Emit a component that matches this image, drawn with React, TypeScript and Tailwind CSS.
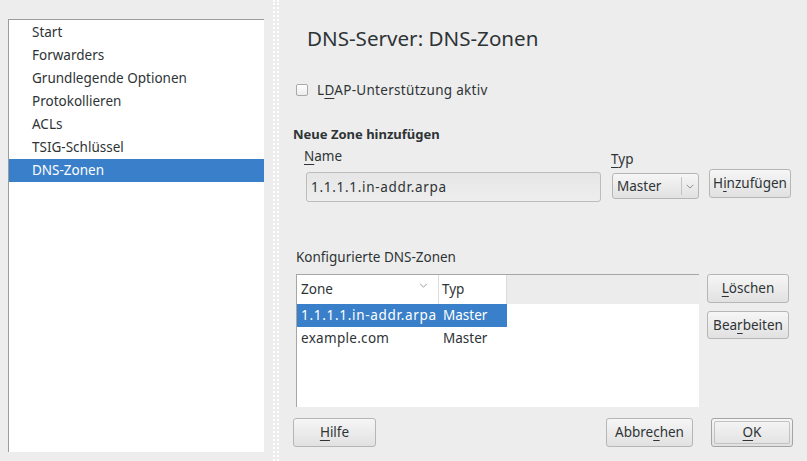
import { FC, ReactNode } from "react";

const navItems = [
  "Start",
  "Forwarders",
  "Grundlegende Optionen",
  "Protokollieren",
  "ACLs",
  "TSIG-Schlüssel",
  "DNS-Zonen",
];

// kleiner Chevron für Combo und Tabellenkopf
const Chevron: FC<{ className?: string }> = ({ className }) => (
  <svg viewBox="0 0 10 6" className={className} fill="none" stroke="currentColor" strokeWidth="1.2">
    <path d="M1 1l4 4 4-4" />
  </svg>
);

const Btn: FC<{ children: ReactNode; className?: string }> = ({ children, className = "" }) => (
  <div
    className={`flex items-center justify-center rounded-[3px] border border-[#b6b6b6] bg-gradient-to-b from-[#f6f6f6] to-[#e1e1e1] text-[#2e3436] ${className}`}
  >
    {children}
  </div>
);

const U: FC<{ children: ReactNode }> = ({ children }) => (
  <span className="underline decoration-[1px] underline-offset-[3px]">{children}</span>
);

const App: FC = () => {
  return (
    <div
      className="flex w-[807px] h-[461px] bg-[#ededed] text-[#2e3436] text-[13.5px] overflow-hidden"
      style={{ fontFamily: '"Noto Sans", "Open Sans", sans-serif' }}
    >
      {/* Navigation links */}
      <div className="pt-[19px] pl-[8px] pb-[9px] w-[264px] shrink-0">
        <div className="h-full bg-white border-t border-l border-[#9c9c9c] pt-[1px]">
          {navItems.map((item) => (
            <div
              key={item}
              className={`h-[23px] pl-[23px] flex items-center ${
                item === "DNS-Zonen" ? "bg-[#3a7fc9] text-white" : ""
              }`}
            >
              {item}
            </div>
          ))}
        </div>
      </div>

      {/* Trenner */}
      <div className="ml-[9px] w-[6px] border-x-2 border-dotted border-white shrink-0" />

      {/* Inhalt */}
      <div className="flex flex-col flex-1">
        <div className="pt-[25px] pl-[28px] text-[20.6px] leading-[26px]">DNS-Server: DNS-Zonen</div>

        <div className="mt-[29px] pl-[17px] h-[20px] flex items-center gap-[9px]">
          <div className="w-[12px] h-[12px] rounded-[2px] border border-[#a9a9a9] bg-gradient-to-b from-white to-[#ececec]" />
          <span className="tracking-[0.3px]">
            L<U>D</U>AP-Unterstützung aktiv
          </span>
        </div>

        <div className="mt-[25px] pl-[14px] h-[20px] flex items-center font-bold text-[13px]">Neue Zone hinzufügen</div>

        <div className="flex">
          <div className="ml-[25px] flex flex-col">
            <div className="h-[22px] flex items-center">
              <span>
                <U>N</U>ame
              </span>
            </div>
            <div className="mt-[5px] ml-[2px] w-[295px] h-[30px] rounded-[3px] border border-[#bcbcbc] bg-gradient-to-b from-[#e6e6e6] to-[#eeeeee] flex items-center pl-[4px] tracking-[0.7px]">
              1.1.1.1.in-addr.arpa
            </div>
          </div>
          <div className="ml-[10px] flex flex-col">
            <div className="mt-[3px] h-[22px] flex items-center">
              <span>
                <U>T</U>yp
              </span>
            </div>
            <div className="mt-[3px] ml-[1px] w-[87px] h-[26px] rounded-[3px] border border-[#b6b6b6] bg-gradient-to-b from-[#f6f6f6] to-[#e1e1e1] flex items-center">
              <span className="pl-[4px] flex-1">Master</span>
              <div className="w-px h-[18px] bg-[#c4c4c4]" />
              <Chevron className="w-[8px] h-[5px] mx-[4px] text-[#8a8a8a]" />
            </div>
          </div>
          <div className="ml-[10px] mt-[24px]">
            <Btn className="w-[82px] h-[29px]">
              <span>
                H<U>i</U>nzufügen
              </span>
            </Btn>
          </div>
        </div>

        <div className="mt-[45px] pl-[17px] h-[20px] flex items-center">Konfigurierte DNS-Zonen</div>

        <div className="mt-[7px] flex">
          <div className="ml-[17px] w-[403px] h-[133px] border-t border-l border-[#a6a6a6] bg-white flex flex-col">
            <div className="h-[29px] flex bg-[#ececec]">
              <div className="w-[142px] bg-white flex items-center pl-[4px] border-r border-[#dcdcdc]">
                <span className="flex-1">Zone</span>
                <Chevron className="w-[9px] h-[5px] mr-[10px] mb-[8px] text-[#9a9a9a]" />
              </div>
              <div className="w-[68px] bg-white flex items-center pl-[3px] border-r border-[#dcdcdc]">Typ</div>
            </div>
            <div className="flex h-[23px] w-[210px] bg-[#3a7fc9] text-white items-center">
              <span className="w-[142px] pl-[4px] tracking-[0.7px] whitespace-nowrap">1.1.1.1.in-addr.arpa</span>
              <span className="pl-[4px]">Master</span>
            </div>
            <div className="flex h-[23px] items-center">
              <span className="w-[142px] pl-[4px] tracking-[0.3px]">example.com</span>
              <span className="pl-[4px]">Master</span>
            </div>
          </div>
          <div className="ml-[8px] flex flex-col gap-[8px]">
            <Btn className="w-[82px] h-[29px]">
              <span>
                <U>L</U>öschen
              </span>
            </Btn>
            <Btn className="w-[82px] h-[28px]">
              <span>
                Bea<U>r</U>beiten
              </span>
            </Btn>
          </div>
        </div>

        <div className="mt-[11px] flex pl-[14px] pr-[14px]">
          <Btn className="w-[83px] h-[29px]">
            <span>
              <U>H</U>ilfe
            </span>
          </Btn>
          <div className="flex-1" />
          <Btn className="w-[87px] h-[29px]">
            <span>
              Abbre<U>c</U>hen
            </span>
          </Btn>
          <div className="ml-[18px] w-[82px] h-[29px] rounded-[3px] border border-[#a4a4a4] p-[2px] bg-gradient-to-b from-[#f6f6f6] to-[#e1e1e1]">
            <div className="w-full h-full rounded-[2px] border border-[#c2c2c2] flex items-center justify-center">
              <span>
                <U>O</U>K
              </span>
            </div>
          </div>
        </div>
      </div>
    </div>
  );
};

export default App;
